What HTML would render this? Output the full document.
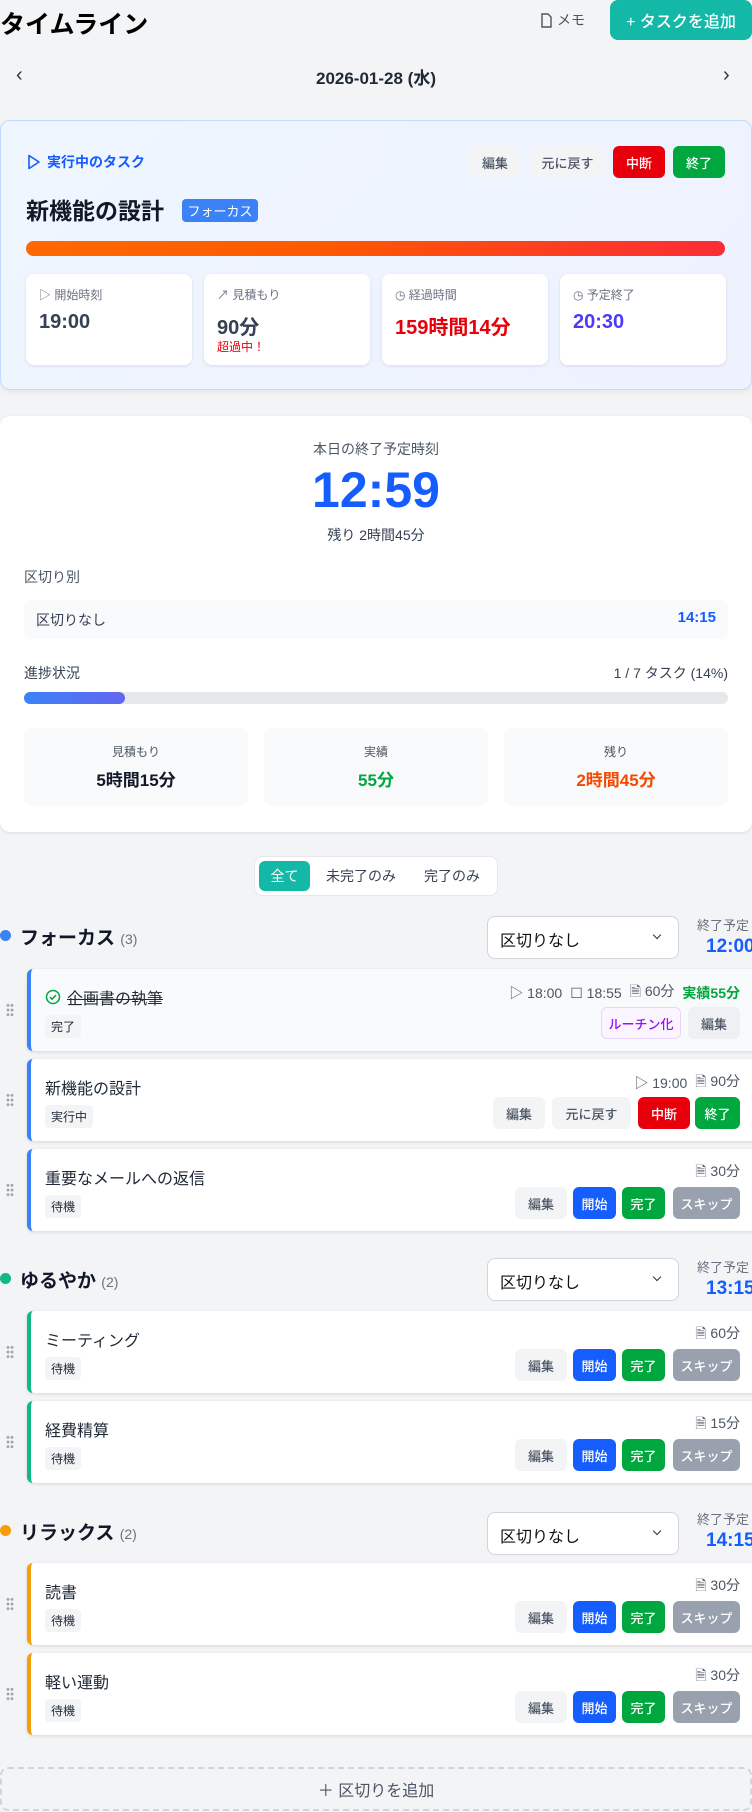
<!DOCTYPE html>
<html><head><meta charset="utf-8"><style>
*{box-sizing:border-box;margin:0;padding:0}
body{width:752px;height:1812px;background:#f3f4f6;font-family:"Liberation Sans","Noto Sans CJK JP",sans-serif;color:#111827;position:relative;overflow:hidden}
.a{position:absolute}
.btn{position:absolute;height:32px;border-radius:6px;font-size:13px;display:flex;align-items:center;justify-content:center;font-weight:500}
.gray{background:#f3f4f6;color:#4b5563}
.red{background:#e7000b;color:#fff}
.grn{background:#00a63e;color:#fff}
.blu{background:#155dfc;color:#fff}
.skp{background:#99a1af;color:#fff}
.stat{position:absolute;top:274px;height:91px;width:166px;background:#fff;border-radius:8px;box-shadow:0 1px 3px rgba(0,0,0,.1)}
.stat .l{position:absolute;left:13px;top:12px;font-size:12px;color:#6b7280;display:flex;align-items:center;gap:4px}
.stat .v{position:absolute;left:13px;top:37px;font-size:20px;font-weight:700;color:#364153}
.card{position:absolute;left:27px;width:740px;height:82px;background:#fff;border-radius:6px;box-shadow:0 1px 3px rgba(0,0,0,.12)}
.card .t{position:absolute;left:16px;top:16px;font-size:16px;color:#1f2937}
.card .tag{position:absolute;left:14px;top:46px;font-size:12px;background:#f3f4f6;color:#1f2937;padding:3px 6px;border-radius:4px}
.card .meta{position:absolute;right:27px;top:12px;font-size:14px;color:#4b5563;display:flex;gap:8px;align-items:center}
.h{position:absolute;left:6px;width:8px;height:14px;background-image:radial-gradient(circle,#9ca3af 1.3px,transparent 1.5px);background-size:4px 4.7px}
.ghead .dot{position:absolute;left:0;width:11px;height:11px;border-radius:50%}
.sel{position:absolute;left:487px;width:192px;height:43px;background:#fff;border:1px solid #d1d5db;border-radius:8px;font-size:16px;padding:10px 12px;color:#111}
.sel:after{content:"";position:absolute;right:18px;top:15px;width:5px;height:5px;border-right:1.5px solid #333;border-bottom:1.5px solid #333;transform:rotate(45deg)}
.eta{position:absolute;left:697px;font-size:13px;color:#6b7280;white-space:nowrap}
.etav{position:absolute;left:706px;font-size:19px;font-weight:700;color:#155dfc}
svg{display:inline-block}
</style></head><body>

<div class="a" style="left:0;top:5px;font-size:25px;font-weight:700;color:#000">タイムライン</div>
<div class="a" style="left:540px;top:10px;font-size:14px;color:#4b5563;display:flex;align-items:center;gap:4px"><svg width="13" height="15" viewBox="0 0 13 15"><path d="M2 1h6l3 3v10H2z" fill="none" stroke="#4b5563" stroke-width="1.4"/></svg>メモ</div>
<div class="a" style="left:610px;top:0;width:142px;height:40px;background:#14b8a6;border-radius:8px;color:#fff;font-size:16px;font-weight:500;display:flex;align-items:center;justify-content:center">+ タスクを追加</div>

<div class="a" style="left:16px;top:64px;font-size:20px;color:#333">‹</div>
<div class="a" style="left:0;width:752px;top:64px;text-align:center;font-size:17px;font-weight:700;color:#1f2937">2026-01-28 (水)</div>
<div class="a" style="left:723px;top:64px;font-size:20px;color:#333">›</div>

<div class="a" style="left:0;top:120px;width:752px;height:270px;border:1.5px solid #bfdbfe;border-radius:10px;background:linear-gradient(135deg,#eff6ff,#eef2ff);box-shadow:0 2px 6px rgba(0,0,0,.06)"></div>
<div class="a" style="left:27px;top:152px;font-size:14px;font-weight:700;color:#155dfc;display:flex;align-items:center;gap:6px"><svg width="14" height="16" viewBox="0 0 14 16"><path d="M2 1.5v13l10-6.5z" fill="none" stroke="#155dfc" stroke-width="1.6" stroke-linejoin="round"/></svg>実行中のタスク</div>
<div class="btn gray" style="left:468px;top:146px;width:54px">編集</div>
<div class="btn gray" style="left:529px;top:146px;width:77px">元に戻す</div>
<div class="btn red" style="left:613px;top:146px;width:52px">中断</div>
<div class="btn grn" style="left:673px;top:146px;width:52px">終了</div>
<div class="a" style="left:26px;top:192px;font-size:23px;font-weight:700;color:#111827">新機能の設計</div>
<div class="a" style="left:182px;top:199px;width:76px;height:23px;background:#3b82f6;border-radius:4px;color:#fff;font-size:13px;display:flex;align-items:center;justify-content:center">フォーカス</div>
<div class="a" style="left:26px;top:241px;width:699px;height:15px;border-radius:8px;background:linear-gradient(90deg,#ff6900,#ff5a00 40%,#fb2c36)"></div>
<div class="stat" style="left:26px"><div class="l">▷ 開始時刻</div><div class="v">19:00</div></div>
<div class="stat" style="left:204px"><div class="l">↗ 見積もり</div><div class="v">90分</div><div class="a" style="left:13px;top:64px;font-size:12px;color:#e7000b">超過中！</div></div>
<div class="stat" style="left:382px"><div class="l">◷ 経過時間</div><div class="v" style="color:#e7000b">159時間14分</div></div>
<div class="stat" style="left:560px"><div class="l">◷ 予定終了</div><div class="v" style="color:#4f39f6">20:30</div></div>

<div class="a" style="left:0;top:416px;width:752px;height:416px;background:#fff;border-radius:10px;box-shadow:0 1px 3px rgba(0,0,0,.1)"></div>
<div class="a" style="left:0;width:752px;top:439px;text-align:center;font-size:14px;color:#4b5563">本日の終了予定時刻</div>
<div class="a" style="left:0;width:752px;top:460px;text-align:center;font-size:50px;font-weight:700;color:#155dfc;line-height:60px">12:59</div>
<div class="a" style="left:0;width:752px;top:525px;text-align:center;font-size:14px;color:#364153">残り 2時間45分</div>
<div class="a" style="left:24px;top:567px;font-size:14px;color:#4b5563">区切り別</div>
<div class="a" style="left:24px;top:600px;width:704px;height:39px;background:#f9fafb;border-radius:8px"></div>
<div class="a" style="left:36px;top:610px;font-size:14px;color:#364153">区切りなし</div>
<div class="a" style="left:660px;top:609px;width:56px;text-align:right;font-size:15px;font-weight:700;color:#155dfc">14:15</div>
<div class="a" style="left:24px;top:663px;font-size:14px;color:#364153">進捗状況</div>
<div class="a" style="right:24px;top:663px;font-size:14px;color:#364153">1 / 7 タスク (14%)</div>
<div class="a" style="left:24px;top:692px;width:704px;height:12px;background:#e5e7eb;border-radius:6px"></div>
<div class="a" style="left:24px;top:692px;width:101px;height:12px;background:linear-gradient(90deg,#3b82f6,#6366f1);border-radius:6px"></div>
<div class="a" style="left:24px;top:728px;width:224px;height:78px;background:#f9fafb;border-radius:8px;text-align:center"><div style="font-size:12px;color:#4b5563;margin-top:15px">見積もり</div><div style="font-size:17px;font-weight:700;color:#111827;margin-top:6px">5時間15分</div></div>
<div class="a" style="left:264px;top:728px;width:224px;height:78px;background:#f9fafb;border-radius:8px;text-align:center"><div style="font-size:12px;color:#4b5563;margin-top:15px">実績</div><div style="font-size:17px;font-weight:700;color:#00a63e;margin-top:6px">55分</div></div>
<div class="a" style="left:504px;top:728px;width:224px;height:78px;background:#f9fafb;border-radius:8px;text-align:center"><div style="font-size:12px;color:#4b5563;margin-top:15px">残り</div><div style="font-size:17px;font-weight:700;color:#f54900;margin-top:6px">2時間45分</div></div>

<div class="a" style="left:254px;top:856px;width:244px;height:40px;background:#fff;border:1px solid #e5e7eb;border-radius:8px"></div>
<div class="a" style="left:259px;top:861px;width:51px;height:30px;background:#14b8a6;border-radius:6px;color:#fff;font-size:14px;display:flex;align-items:center;justify-content:center">全て</div>
<div class="a" style="left:326px;top:866px;font-size:14px;color:#364153">未完了のみ</div>
<div class="a" style="left:424px;top:866px;font-size:14px;color:#364153">完了のみ</div>

<div class="ghead"><div class="dot" style="top:930px;background:#3b82f6"></div></div>
<div class="a" style="left:20px;top:923px;font-size:19px;font-weight:700">フォーカス <span style="font-size:14px;font-weight:400;color:#6b7280">(3)</span></div>
<div class="sel" style="top:916px">区切りなし</div>
<div class="eta" style="top:915px">終了予定</div>
<div class="etav" style="top:936px">12:00</div>

<div class="h" style="top:1003px"></div>
<div class="card" style="top:969px;background:#f9fafb;border-left:4px solid #3b82f6">
 <div class="t" style="left:14px;display:flex;align-items:center;gap:6px"><svg width="16" height="16" viewBox="0 0 16 16"><circle cx="8" cy="8" r="6.5" fill="none" stroke="#00a63e" stroke-width="1.5"/><path d="M5 8.2l2 2 4-4" fill="none" stroke="#00a63e" stroke-width="1.5"/></svg><span style="text-decoration:line-through">企画書の執筆</span></div>
 <div class="tag">完了</div>
 <div class="meta"><span>▷ 18:00</span><span>☐ 18:55</span><span>🗎 60分</span><span style="color:#00a63e;font-weight:700">実績55分</span></div>
 <div class="btn" style="left:570px;top:38px;width:80px;border:1px solid #e9d4ff;background:#faf5ff;color:#9810fa">ルーチン化</div>
 <div class="btn gray" style="left:657px;top:38px;width:52px;background:#eef0f3">編集</div>
</div>

<div class="h" style="top:1093px"></div>
<div class="card" style="top:1059px;border-left:4px solid #3b82f6">
 <div class="t" style="left:14px">新機能の設計</div>
 <div class="tag">実行中</div>
 <div class="meta"><span>▷ 19:00</span><span>🗎 90分</span></div>
 <div class="btn gray" style="left:462px;top:38px;width:52px">編集</div>
 <div class="btn gray" style="left:521px;top:38px;width:79px">元に戻す</div>
 <div class="btn red" style="left:607px;top:38px;width:52px">中断</div>
 <div class="btn grn" style="left:664px;top:38px;width:45px">終了</div>
</div>

<div class="h" style="top:1183px"></div>
<div class="card" style="top:1149px;border-left:4px solid #3b82f6">
 <div class="t" style="left:14px">重要なメールへの返信</div>
 <div class="tag">待機</div>
 <div class="meta"><span>🗎 30分</span></div>
 <div class="btn gray" style="left:484px;top:38px;width:52px">編集</div>
 <div class="btn blu" style="left:542px;top:38px;width:43px">開始</div>
 <div class="btn grn" style="left:591px;top:38px;width:43px">完了</div>
 <div class="btn skp" style="left:642px;top:38px;width:67px">スキップ</div>
</div>

<div class="ghead"><div class="dot" style="top:1273px;background:#10b981"></div></div>
<div class="a" style="left:20px;top:1266px;font-size:19px;font-weight:700">ゆるやか <span style="font-size:14px;font-weight:400;color:#6b7280">(2)</span></div>
<div class="sel" style="top:1258px">区切りなし</div>
<div class="eta" style="top:1257px">終了予定</div>
<div class="etav" style="top:1278px">13:15</div>

<div class="h" style="top:1345px"></div>
<div class="card" style="top:1311px;border-left:4px solid #10b981">
 <div class="t" style="left:14px">ミーティング</div><div class="tag">待機</div>
 <div class="meta"><span>🗎 60分</span></div>
 <div class="btn gray" style="left:484px;top:38px;width:52px">編集</div>
 <div class="btn blu" style="left:542px;top:38px;width:43px">開始</div>
 <div class="btn grn" style="left:591px;top:38px;width:43px">完了</div>
 <div class="btn skp" style="left:642px;top:38px;width:67px">スキップ</div>
</div>
<div class="h" style="top:1435px"></div>
<div class="card" style="top:1401px;border-left:4px solid #10b981">
 <div class="t" style="left:14px">経費精算</div><div class="tag">待機</div>
 <div class="meta"><span>🗎 15分</span></div>
 <div class="btn gray" style="left:484px;top:38px;width:52px">編集</div>
 <div class="btn blu" style="left:542px;top:38px;width:43px">開始</div>
 <div class="btn grn" style="left:591px;top:38px;width:43px">完了</div>
 <div class="btn skp" style="left:642px;top:38px;width:67px">スキップ</div>
</div>

<div class="ghead"><div class="dot" style="top:1525px;background:#f59e0b"></div></div>
<div class="a" style="left:20px;top:1518px;font-size:19px;font-weight:700">リラックス <span style="font-size:14px;font-weight:400;color:#6b7280">(2)</span></div>
<div class="sel" style="top:1512px">区切りなし</div>
<div class="eta" style="top:1509px">終了予定</div>
<div class="etav" style="top:1530px">14:15</div>

<div class="h" style="top:1597px"></div>
<div class="card" style="top:1563px;border-left:4px solid #f59e0b">
 <div class="t" style="left:14px">読書</div><div class="tag">待機</div>
 <div class="meta"><span>🗎 30分</span></div>
 <div class="btn gray" style="left:484px;top:38px;width:52px">編集</div>
 <div class="btn blu" style="left:542px;top:38px;width:43px">開始</div>
 <div class="btn grn" style="left:591px;top:38px;width:43px">完了</div>
 <div class="btn skp" style="left:642px;top:38px;width:67px">スキップ</div>
</div>
<div class="h" style="top:1687px"></div>
<div class="card" style="top:1653px;border-left:4px solid #f59e0b">
 <div class="t" style="left:14px">軽い運動</div><div class="tag">待機</div>
 <div class="meta"><span>🗎 30分</span></div>
 <div class="btn gray" style="left:484px;top:38px;width:52px">編集</div>
 <div class="btn blu" style="left:542px;top:38px;width:43px">開始</div>
 <div class="btn grn" style="left:591px;top:38px;width:43px">完了</div>
 <div class="btn skp" style="left:642px;top:38px;width:67px">スキップ</div>
</div>

<div class="a" style="left:0;top:1767px;width:752px;height:44px;border:2px dashed #d1d5db;border-radius:8px;display:flex;align-items:center;justify-content:center;font-size:16px;color:#4b5563">＋ 区切りを追加</div>
</body></html>
